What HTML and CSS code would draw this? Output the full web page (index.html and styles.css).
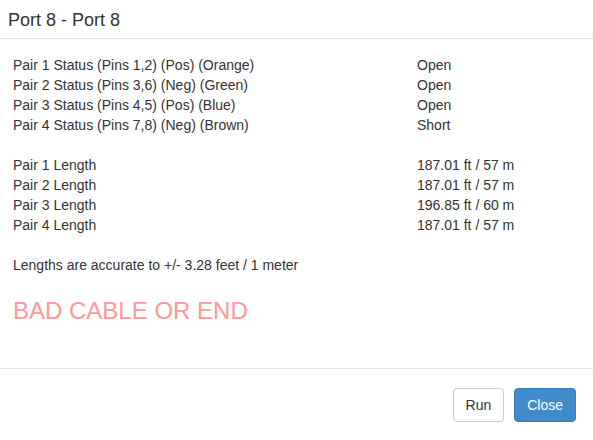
FILE: index.html
```html
<!DOCTYPE html>
<html>
<head>
<meta charset="utf-8">
<link rel="stylesheet" href="styles.css">
</head>
<body>
<div class="modal">
  <div class="modal-header">
    <h4 class="modal-title">Port 8 - Port 8</h4>
  </div>
  <div class="modal-body">
    <div class="grid">
      <div>Pair 1 Status (Pins 1,2) (Pos) (Orange)</div><div>Open</div>
      <div>Pair 2 Status (Pins 3,6) (Neg) (Green)</div><div>Open</div>
      <div>Pair 3 Status (Pins 4,5) (Pos) (Blue)</div><div>Open</div>
      <div>Pair 4 Status (Pins 7,8) (Neg) (Brown)</div><div>Short</div>
      <div class="blank"></div><div class="blank"></div>
      <div>Pair 1 Length</div><div>187.01 ft / 57 m</div>
      <div>Pair 2 Length</div><div>187.01 ft / 57 m</div>
      <div>Pair 3 Length</div><div>196.85 ft / 60 m</div>
      <div>Pair 4 Length</div><div>187.01 ft / 57 m</div>
    </div>
    <p class="note">Lengths are accurate to +/- 3.28 feet / 1 meter</p>
    <h3 class="result">BAD CABLE OR END</h3>
  </div>
  <div class="modal-footer">
    <button class="btn btn-default">Run</button>
    <button class="btn btn-primary">Close</button>
  </div>
</div>
</body>
</html>
```
FILE: styles.css
```css
html, body {
  margin: 0;
  padding: 0;
  background: #fff;
}
body {
  font-family: "Liberation Sans", Arial, sans-serif;
  font-size: 14px;
  line-height: 20px;
  color: #333;
}
.modal {
  width: 593px;
  height: 440px;
  overflow: hidden;
}
.modal-header {
  padding: 7px 8px 5px;
  border-bottom: 1px solid #e5e5e5;
}
.modal-title {
  margin: 0;
  font-size: 18px;
  font-weight: normal;
  line-height: 26px;
  color: #333;
}
.modal-body {
  padding: 16px 13px 44px;
}
.grid {
  display: grid;
  grid-template-columns: 404px auto;
}
.blank {
  height: 20px;
}
.note {
  margin: 20px 0 0;
}
.result {
  margin: 23px 0 0;
  font-size: 24px;
  line-height: 26px;
  font-weight: normal;
  color: #f99;
}
.modal-footer {
  border-top: 1px solid #e5e5e5;
  padding: 19px 17px 18px 15px;
  display: flex;
  justify-content: flex-end;
  gap: 10px;
}
.btn {
  font-family: "Liberation Sans", Arial, sans-serif;
  font-size: 14px;
  line-height: 20px;
  padding: 6px 12px;
  border: 1px solid transparent;
  border-radius: 4px;
  margin: 0;
  cursor: pointer;
}
.btn-default {
  background: #fff;
  border-color: #ccc;
  color: #333;
}
.btn-primary {
  background: #428bca;
  border-color: #357ebd;
  color: #fff;
}
```
